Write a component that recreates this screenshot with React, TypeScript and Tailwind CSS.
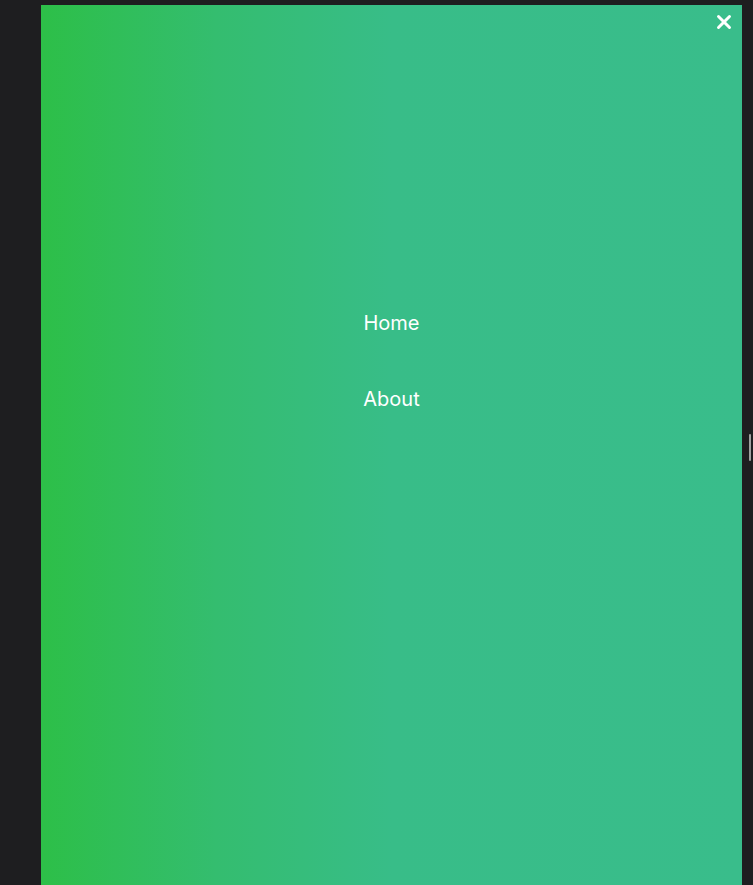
import { X } from 'lucide-react';

const LINKS = ['Home', 'About'];

export default function App() {
  return (
    <div className="relative h-[885px] w-full overflow-hidden bg-[#1e1e20] pl-[41px] pr-[11px] pt-[5px]">
      <div className="relative h-full w-full bg-[linear-gradient(90deg,#2dbf48_0%,#34bd6f_25%,#38bd88_50%,#39bd8b_100%)]">
        <button className="absolute right-[7px] top-[6px] text-white">
          <X className="h-[22px] w-[22px]" strokeWidth={3.2} />
        </button>
        <nav className="flex flex-col items-center gap-[48px] pt-[304px]">
          {LINKS.map(link => (
            <a
              key={link}
              href="#"
              className="text-[20px] leading-[28px] text-white font-['Inter',sans-serif] font-normal"
            >
              {link}
            </a>
          ))}
        </nav>
      </div>
      <div className="absolute right-[2px] top-[434px] h-[27px] w-[2px] rounded-full bg-[#a0a0a0]" />
    </div>
  );
}
